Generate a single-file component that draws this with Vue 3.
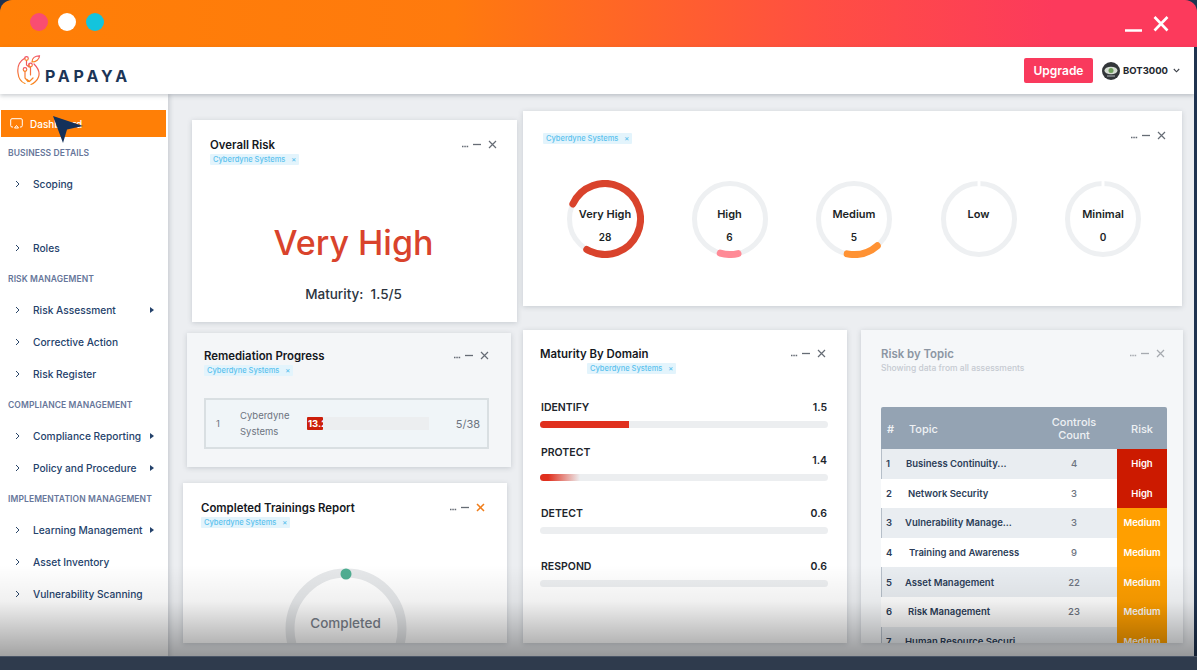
<template>
  <div class="window">
    <div class="titlebar">
      <div class="dots">
        <span class="dot pink"></span>
        <span class="dot white"></span>
        <span class="dot cyan"></span>
      </div>
      <svg class="win-controls" width="44" height="18" viewBox="0 0 44 18">
        <path d="M0 15.5H17M29.5 2L42.5 15.5M42.5 2L29.5 15.5" fill="none" stroke="#fff" stroke-width="2.6" />
      </svg>
    </div>

    <header class="topbar">
      <div class="logo">
        <svg width="24" height="31" viewBox="0 0 24 31" fill="none">
          <defs>
            <linearGradient id="papayaGrad" x1="0" y1="0" x2="0" y2="1">
              <stop offset="0" stop-color="#f0506a" />
              <stop offset="1" stop-color="#f98a1c" />
            </linearGradient>
          </defs>
          <g stroke="url(#papayaGrad)" stroke-width="1.2" stroke-linecap="round">
            <path d="M8 3C3 6 0 11 1 18C1.500 23 4 27 8 28.500" />
            <path d="M17 9C21 13 23 18 21.500 22C20.500 25 17 28.500 14 29.500" />
            <path d="M15 7C15 3 18 .8 22.500 .8C22.500 4.500 19 7 15 7Z" />
            <path d="M9.500 5.500V10L12 12V9M8 16V23L11 26.500M13.500 12V20M10 24.500L12.500 26.500L16 23" />
            <circle cx="9.500" cy="3.500" r="1.800" />
            <circle cx="13.500" cy="10" r="1.800" />
            <circle cx="8" cy="14.500" r="1.800" />
          </g>
        </svg>
        <span class="logo-text">PAPAYA</span>
      </div>
      <div class="account">
        <button class="upgrade">Upgrade</button>
        <svg class="avatar" width="18" height="18" viewBox="0 0 18 18">
          <circle cx="9" cy="9" r="9" fill="#33363a" />
          <ellipse cx="9" cy="8.500" rx="6.500" ry="3.800" fill="#d5dcd2" />
          <circle cx="9" cy="8.500" r="2.500" fill="#6f9e5c" />
          <path d="M5 14H13" stroke="#8b8f93" stroke-width="1.500" />
        </svg>
        <span class="username">BOT3000</span>
        <svg width="7" height="5" viewBox="0 0 7 5">
          <path d="M.8 1L3.500 3.800L6.200 1" fill="none" stroke="#3a3f47" stroke-width="1.100" />
        </svg>
      </div>
    </header>

    <div class="content">
      <aside class="sidebar">
        <div class="nav-active">
          <svg width="13" height="11" viewBox="0 0 13 11" fill="none">
            <path d="M3 9H2C1.200 9 .7 8.500 .7 7.700V2C.7 1.200 1.200 .7 2 .7H11C11.800 .7 12.300 1.200 12.300 2V7.700C12.300 8.500 11.800 9 11 9H10M4.500 10L6.500 7.500L8.500 10Z" stroke="#fff" stroke-width="1" />
          </svg>
          <span>Dashboard</span>
        </div>
        <template v-for="entry in navEntries" :key="entry.label">
          <div v-if="entry.type === 'section'" class="nav-section">{{ entry.label }}</div>
          <div v-else-if="entry.type === 'gap'" class="nav-gap"></div>
          <div v-else class="nav-item">
            <svg class="chevron" width="5" height="8" viewBox="0 0 5 8">
              <path d="M1 1L4 4L1 7" fill="none" stroke="#2a4568" stroke-width="1" />
            </svg>
            <span class="nav-label">{{ entry.label }}</span>
            <span v-if="entry.sub" class="nav-caret"></span>
          </div>
        </template>
      </aside>

      <main class="board">
        <div class="row-top">
          <section class="card overall">
            <div class="card-head">
              <div>
                <h3>Overall Risk</h3>
                <span class="chip">Cyberdyne Systems <i>×</i></span>
              </div>
              <svg class="card-tools" width="35" height="9" viewBox="0 0 35 9">
                <path d="M0 6.500H7" stroke="#666c75" stroke-width="1.500" stroke-dasharray="1.500 .8" />
                <path d="M11 4.500H19" stroke="#666c75" stroke-width="1.300" />
                <path class="tool-x" d="M27 1L34 8M34 1L27 8" stroke="#666c75" stroke-width="1.200" />
              </svg>
            </div>
            <div class="overall-level">Very High</div>
            <div class="overall-maturity">Maturity:&nbsp; 1.5/5</div>
          </section>

          <section class="card rings">
            <div class="card-head">
              <span class="chip">Cyberdyne Systems <i>×</i></span>
              <svg class="card-tools" width="35" height="9" viewBox="0 0 35 9">
                <path d="M0 6.500H7" stroke="#666c75" stroke-width="1.500" stroke-dasharray="1.500 .8" />
                <path d="M11 4.500H19" stroke="#666c75" stroke-width="1.300" />
                <path class="tool-x" d="M27 1L34 8M34 1L27 8" stroke="#666c75" stroke-width="1.200" />
              </svg>
            </div>
            <div class="ring-list">
              <div v-for="ring in rings" :key="ring.label" class="ring">
                <svg width="78" height="78" viewBox="0 0 78 78">
                  <circle cx="39" cy="39" r="35.500" fill="none" stroke="#eef0f2" stroke-width="5" />
                  <circle
                    v-if="ring.sweep"
                    cx="39" cy="39" r="35.500" fill="none"
                    :stroke="ring.color"
                    :stroke-width="ring.width"
                    stroke-linecap="round"
                    pathLength="360"
                    :stroke-dasharray="`${ring.sweep} 360`"
                    :transform="`rotate(${ring.start - 90} 39 39)`"
                  />
                  <path v-else d="M39 1V6.500" stroke="#fff" stroke-width="3" />
                </svg>
                <div class="ring-text">
                  <div class="ring-label">{{ ring.label }}</div>
                  <div class="ring-value">{{ ring.value }}</div>
                </div>
              </div>
            </div>
          </section>
        </div>

        <div class="row-bottom">
          <div class="stack">
            <section class="card remediation">
              <div class="card-head">
                <div>
                  <h3>Remediation Progress</h3>
                  <span class="chip">Cyberdyne Systems <i>×</i></span>
                </div>
                <svg class="card-tools" width="35" height="9" viewBox="0 0 35 9">
                  <path d="M0 6.500H7" stroke="#666c75" stroke-width="1.500" stroke-dasharray="1.500 .8" />
                  <path d="M11 4.500H19" stroke="#666c75" stroke-width="1.300" />
                  <path class="tool-x" d="M27 1L34 8M34 1L27 8" stroke="#666c75" stroke-width="1.200" />
                </svg>
              </div>
              <div class="remediation-row">
                <span class="rem-index">1</span>
                <span class="rem-name">Cyberdyne Systems</span>
                <div class="rem-bar"><div class="rem-fill">13.2</div></div>
                <span class="rem-count">5/38</span>
              </div>
            </section>

            <section class="card trainings">
              <div class="card-head">
                <div>
                  <h3>Completed Trainings Report</h3>
                  <span class="chip">Cyberdyne Systems <i>×</i></span>
                </div>
                <svg class="card-tools" width="35" height="9" viewBox="0 0 35 9">
                  <path d="M0 6.500H7" stroke="#666c75" stroke-width="1.500" stroke-dasharray="1.500 .8" />
                  <path d="M11 4.500H19" stroke="#666c75" stroke-width="1.300" />
                  <path d="M27 1L34 8M34 1L27 8" stroke="#f07d1a" stroke-width="1.500" />
                </svg>
              </div>
              <div class="gauge">
                <svg width="122" height="122" viewBox="0 0 122 122">
                  <circle cx="61" cy="61" r="56" fill="none" stroke="#e6e8ea" stroke-width="9" />
                  <circle cx="61" cy="6" r="5.500" fill="#4fae92" />
                </svg>
                <div class="gauge-label">Completed</div>
              </div>
            </section>
          </div>

          <section class="card maturity">
            <div class="card-head">
              <div>
                <h3>Maturity By Domain</h3>
                <span class="chip chip-offset">Cyberdyne Systems <i>×</i></span>
              </div>
              <svg class="card-tools" width="35" height="9" viewBox="0 0 35 9">
                <path d="M0 6.500H7" stroke="#666c75" stroke-width="1.500" stroke-dasharray="1.500 .8" />
                <path d="M11 4.500H19" stroke="#666c75" stroke-width="1.300" />
                <path class="tool-x" d="M27 1L34 8M34 1L27 8" stroke="#666c75" stroke-width="1.200" />
              </svg>
            </div>
            <div class="domains">
              <div v-for="domain in domains" :key="domain.name" class="domain">
                <div class="domain-line">
                  <span :class="{ raised: domain.raised }">{{ domain.name }}</span>
                  <span>{{ domain.score }}</span>
                </div>
                <div class="domain-track">
                  <div class="domain-fill" :class="domain.fill"></div>
                </div>
              </div>
            </div>
          </section>

          <section class="card topics">
            <div class="card-head">
              <div>
                <h3>Risk by Topic</h3>
                <p class="topics-sub">Showing data from all assessments</p>
              </div>
              <svg class="card-tools faded" width="35" height="9" viewBox="0 0 35 9">
                <path d="M0 6.500H7" stroke="#666c75" stroke-width="1.500" stroke-dasharray="1.500 .8" />
                <path d="M11 4.500H19" stroke="#666c75" stroke-width="1.300" />
                <path class="tool-x" d="M27 1L34 8M34 1L27 8" stroke="#666c75" stroke-width="1.200" />
              </svg>
            </div>
            <div class="topic-table">
              <div class="topic-head">
                <span class="cell-num">#</span>
                <span class="head-topic">Topic</span>
                <span class="cell-count">Controls<br />Count</span>
                <span class="head-risk">Risk</span>
              </div>
              <div
                v-for="(row, i) in topics"
                :key="row.name"
                class="topic-row"
                :class="{ shaded: i % 2 === 0 }"
              >
                <span class="cell-num">{{ i + 1 }}</span>
                <span class="cell-topic" :style="{ paddingLeft: row.indent + 'px' }">{{ row.name }}</span>
                <span class="cell-count">{{ row.count }}</span>
                <span class="cell-risk" :class="row.risk.toLowerCase()">{{ row.risk }}</span>
              </div>
            </div>
          </section>
        </div>
      </main>
    </div>

    <div class="dim"></div>
    <footer class="bottom-strip"></footer>

    <svg class="pointer" width="32" height="30" viewBox="0 0 32 30">
      <path d="M1 1L31 11L15 14.500L11 28Z" fill="#14315a" />
    </svg>
  </div>
</template>

<script setup>
const navEntries = [
  { type: 'section', label: 'BUSINESS DETAILS' },
  { label: 'Scoping' },
  { type: 'gap', label: 'gap' },
  { label: 'Roles' },
  { type: 'section', label: 'RISK MANAGEMENT' },
  { label: 'Risk Assessment', sub: true },
  { label: 'Corrective Action' },
  { label: 'Risk Register' },
  { type: 'section', label: 'COMPLIANCE MANAGEMENT' },
  { label: 'Compliance Reporting', sub: true },
  { label: 'Policy and Procedure', sub: true },
  { type: 'section', label: 'IMPLEMENTATION MANAGEMENT' },
  { label: 'Learning Management', sub: true },
  { label: 'Asset Inventory' },
  { label: 'Vulnerability Scanning' }
]

const rings = [
  { label: 'Very High', value: 28, color: '#d9432c', start: 295, sweep: 276, width: 7 },
  { label: 'High', value: 6, color: '#ff8a96', start: 167, sweep: 29, width: 7 },
  { label: 'Medium', value: 5, color: '#ff9233', start: 139, sweep: 52, width: 7 },
  { label: 'Low', value: '', color: '', start: 0, sweep: 0 },
  { label: 'Minimal', value: 0, color: '', start: 0, sweep: 0 }
]

const domains = [
  { name: 'IDENTIFY', score: '1.5', fill: 'fill-identify' },
  { name: 'PROTECT', score: '1.4', fill: 'fill-protect', raised: true },
  { name: 'DETECT', score: '0.6', fill: '' },
  { name: 'RESPOND', score: '0.6', fill: '' }
]

const topics = [
  { name: 'Business Continuity...', count: 4, risk: 'High', indent: 1 },
  { name: 'Network Security', count: 3, risk: 'High', indent: 3 },
  { name: 'Vulnerability Manage...', count: 3, risk: 'Medium', indent: 0 },
  { name: 'Training and Awareness', count: 9, risk: 'Medium', indent: 4 },
  { name: 'Asset Management', count: 22, risk: 'Medium', indent: 0 },
  { name: 'Risk Management', count: 23, risk: 'Medium', indent: 3 },
  { name: 'Human Resource Securi...', count: '', risk: 'Medium', indent: 0 }
]
</script>

<style>
body {
  background: #2f3b4d;
}
</style>

<style scoped>
.window {
  position: relative;
  width: 1197px;
  height: 670px;
  overflow: hidden;
  display: flex;
  flex-direction: column;
  padding-right: 3px;
  box-sizing: border-box;
  background: #1f3350;
  font-family: Inter, "Liberation Sans", sans-serif;
  color: #1b1f26;
}

.titlebar {
  height: 47px;
  flex-shrink: 0;
  margin-right: -3px;
  display: flex;
  align-items: center;
  justify-content: space-between;
  padding: 0 28px 3px 30px;
  box-sizing: border-box;
  border-radius: 12px 12px 0 0;
  background: linear-gradient(90deg, #ff7f06 0%, #ff7a0e 38%, #ff4f42 68%, #fc3a5c 88%, #fc3a5c 100%);
}

.dots {
  display: flex;
  gap: 10px;
}

.dot {
  width: 18px;
  height: 18px;
  border-radius: 50%;
}

.pink { background: #f94d72; }
.white { background: #fff; }
.cyan { background: #13c4dd; }

.win-controls {
  margin-top: 3px;
}

.topbar {
  height: 47px;
  flex-shrink: 0;
  display: flex;
  align-items: center;
  justify-content: space-between;
  padding: 0 14px 0 17px;
  background: #fff;
  position: relative;
  z-index: 2;
  box-shadow: 0 2px 4px rgba(60, 70, 85, 0.25);
}

.logo {
  display: flex;
  align-items: center;
  gap: 4px;
}

.logo-text {
  font-size: 16px;
  font-weight: 700;
  letter-spacing: 3.8px;
  color: #1c3557;
  margin-top: 11px;
}

.account {
  display: flex;
  align-items: center;
}

.upgrade {
  width: 69px;
  height: 25px;
  border: 0;
  padding: 0;
  border-radius: 2px;
  background: #f93a5d;
  color: #fff;
  font-family: inherit;
  font-size: 12px;
  font-weight: 600;
}

.avatar {
  margin-left: 9px;
}

.username {
  margin: 0 5px 0 3px;
  font-size: 9.5px;
  font-weight: 700;
  color: #23272e;
}

.content {
  flex: 1;
  min-height: 0;
  display: flex;
  background: #eceef1;
}

.sidebar {
  width: 168px;
  flex-shrink: 0;
  box-sizing: border-box;
  padding: 16px 2px 0 1px;
  background: #fff;
  box-shadow: 2px 0 4px rgba(60, 70, 85, 0.18);
  position: relative;
  z-index: 1;
}

.nav-active {
  height: 27px;
  display: flex;
  align-items: center;
  gap: 7px;
  padding-left: 9px;
  background: #ff7f06;
  color: #fff;
  font-size: 10px;
  font-weight: 500;
  margin-bottom: 1px;
}

.nav-section {
  height: 30px;
  display: flex;
  align-items: center;
  padding-left: 7px;
  font-size: 8.5px;
  letter-spacing: 0.1px;
  font-weight: 600;
  color: #66769a;
  white-space: nowrap;
}

.nav-gap {
  height: 32px;
}

.nav-item {
  height: 32px;
  display: flex;
  align-items: center;
  padding-left: 14px;
  font-size: 10.2px;
  font-weight: 500;
  color: #24426b;
}

.nav-label {
  margin-left: 13px;
  white-space: nowrap;
}

.nav-caret {
  margin-left: auto;
  margin-right: 12px;
  border-left: 4px solid #24426b;
  border-top: 3px solid transparent;
  border-bottom: 3px solid transparent;
}

.board {
  flex: 1;
  min-width: 0;
  padding-top: 17px;
  overflow: hidden;
}

.row-top {
  display: flex;
  align-items: flex-start;
  gap: 6px;
  margin-left: 24px;
}

.row-bottom {
  display: flex;
  align-items: flex-start;
  margin: 8px 0 0 15px;
}

.stack {
  width: 328px;
  flex-shrink: 0;
  display: flex;
  flex-direction: column;
  gap: 16px;
  padding-top: 3px;
  margin-right: 12px;
}

.card {
  box-sizing: border-box;
  background: #fff;
  box-shadow: 0 1px 5px rgba(70, 80, 95, 0.22);
  overflow: hidden;
  flex-shrink: 0;
}

.card-head {
  display: flex;
  justify-content: space-between;
  align-items: flex-start;
}

.card-tools {
  margin-top: 2px;
}

h3 {
  margin: 0;
  font-size: 11.4px;
  line-height: 14px;
  font-weight: 600;
  color: #15181d;
  white-space: nowrap;
}

.chip {
  display: block;
  width: fit-content;
  margin-top: 2px;
  height: 11px;
  line-height: 11px;
  padding: 0 3px;
  border-radius: 1px;
  background: #e3f4fc;
  color: #5cc2ee;
  font-size: 7.5px;
  font-weight: 500;
  white-space: nowrap;
}

.chip i {
  font-style: normal;
  margin-left: 4px;
}

.chip-offset {
  margin-left: 47px;
}

.overall {
  width: 325px;
  height: 202px;
  margin-top: 9px;
  padding: 18px 20px 0 18px;
  text-align: center;
}

.overall .card-head {
  text-align: left;
}

.overall-level {
  margin-top: 56px;
  font-size: 34px;
  line-height: 44px;
  font-weight: 500;
  color: #d9432c;
}

.overall-maturity {
  margin-top: 20px;
  font-size: 13.5px;
  line-height: 18px;
  font-weight: 500;
  color: #2c3440;
}

.rings {
  width: 659px;
  height: 195px;
  padding: 20px 16px 0 20px;
}

.rings .card-tools {
  margin-top: 0;
}

.ring-list {
  display: flex;
  gap: 46.5px;
  margin: 36px 0 0 23px;
}

.ring {
  display: grid;
  width: 78px;
  height: 78px;
}

.ring > * {
  grid-area: 1 / 1;
}

.ring-text {
  padding-top: 27px;
  text-align: center;
  font-size: 11px;
  font-weight: 600;
  line-height: 14px;
  color: #1b1f26;
}

.ring-value {
  margin-top: 9px;
  font-size: 10px;
}

.remediation {
  width: 324px;
  height: 134px;
  margin-left: 4px;
  padding: 16px 22px 0 17px;
  background: #f4f6f8;
}

.remediation-row {
  display: flex;
  align-items: center;
  height: 51px;
  box-sizing: border-box;
  margin-top: 22px;
  padding: 0 7px 0 10px;
  border: 2px solid #d9dfe2;
  background: #f0f5f8;
  color: #6d7480;
  font-size: 9.5px;
}

.rem-index {
  width: 24px;
}

.rem-name {
  width: 67px;
  line-height: 16px;
}

.rem-bar {
  width: 122px;
  height: 13px;
  background: #eceef0;
}

.rem-fill {
  width: 16px;
  height: 100%;
  overflow: hidden;
  border-radius: 1px;
  background: #cc1f0b;
  color: #fff;
  font-size: 9.5px;
  font-weight: 700;
  line-height: 13px;
  padding-left: 1px;
  box-sizing: border-box;
  white-space: nowrap;
}

.rem-count {
  margin-left: auto;
  font-size: 11px;
}

.trainings {
  width: 324px;
  height: 160px;
  padding: 18px 22px 0 18px;
}

.gauge {
  display: grid;
  justify-items: center;
  margin: 40px 0 0 5px;
}

.gauge > * {
  grid-area: 1 / 1;
}

.gauge-label {
  padding-top: 47px;
  font-size: 13.5px;
  font-weight: 500;
  color: #7b828c;
}

.maturity {
  width: 324px;
  height: 313px;
  padding: 17px 21px 0 17px;
}

.domains {
  margin-top: 1px;
}

.domain {
  height: 53px;
  display: flex;
  flex-direction: column;
  justify-content: flex-end;
}

.domain-line {
  width: 288px;
  box-sizing: border-box;
  display: flex;
  align-items: flex-end;
  justify-content: space-between;
  padding: 0 1px;
  font-size: 10.5px;
  font-weight: 600;
  line-height: 14px;
  color: #20242b;
}

.raised {
  margin-bottom: 8px;
}

.domain-track {
  width: 288px;
  height: 7px;
  margin-top: 6px;
  border-radius: 4px;
  background: #eceef0;
  overflow: hidden;
}

.domain-fill {
  height: 100%;
}

.fill-identify {
  width: 31%;
  background: #e0301e;
}

.fill-protect {
  width: 14%;
  background: linear-gradient(90deg, #e0301e 20%, rgba(224, 48, 30, 0) 100%);
}

.topics {
  width: 322px;
  height: 313px;
  margin-left: 14px;
  padding: 17px 18px 0 20px;
  background: #f5f7f9;
}

.topics h3 {
  color: #8c96a3;
}

.topics-sub {
  margin: 2px 0 0;
  font-size: 8.5px;
  line-height: 11px;
  font-weight: 500;
  color: #c5cad1;
}

.faded {
  opacity: 0.55;
}

.topic-table {
  width: 286px;
  margin-top: 33px;
  font-size: 9.5px;
}

.topic-head,
.topic-row {
  display: grid;
  grid-template-columns: 24px 126px 86px 50px;
  align-items: center;
}

.topic-head {
  height: 42px;
  box-sizing: border-box;
  padding-top: 2px;
  border-radius: 2px 2px 0 0;
  background: #94a3b3;
  color: #eef1f4;
  font-size: 11px;
  line-height: 13px;
  font-weight: 500;
}

.head-topic {
  padding-left: 4px;
}

.head-risk {
  text-align: center;
}

.cell-num {
  padding-left: 5px;
  font-weight: 600;
  color: #2c3d58;
}

.topic-head .cell-num {
  color: #eef1f4;
  padding-left: 6px;
}

.topic-row {
  height: 29.600px;
  background: #fff;
}

.shaded {
  background: #e9edf1;
  box-shadow: inset 1px 0 0 #b5bec8;
}

.cell-topic {
  font-weight: 600;
  color: #2c3d58;
  white-space: nowrap;
}

.cell-count {
  text-align: center;
  color: #6d7480;
  font-weight: 500;
}

.topic-head .cell-count {
  color: #eef1f4;
}

.cell-risk {
  height: 100%;
  display: flex;
  align-items: center;
  justify-content: center;
  color: #fff;
  font-weight: 600;
}

.high { background: #cc1a00; }
.medium { background: #ff9f00; }

.dim {
  position: absolute;
  left: 0;
  right: 0;
  top: 565px;
  height: 91px;
  background: linear-gradient(180deg, rgba(0, 0, 0, 0) 0%, rgba(0, 0, 0, 0.06) 40%, rgba(0, 0, 0, 0.36) 100%);
  z-index: 3;
}

.bottom-strip {
  position: absolute;
  left: 0;
  right: 0;
  bottom: 0;
  height: 14px;
  background: #2f3b4d;
  border-top: 1px solid #4a5566;
  box-sizing: border-box;
  z-index: 4;
}

.pointer {
  position: absolute;
  left: 52px;
  top: 115px;
  z-index: 5;
}
</style>
